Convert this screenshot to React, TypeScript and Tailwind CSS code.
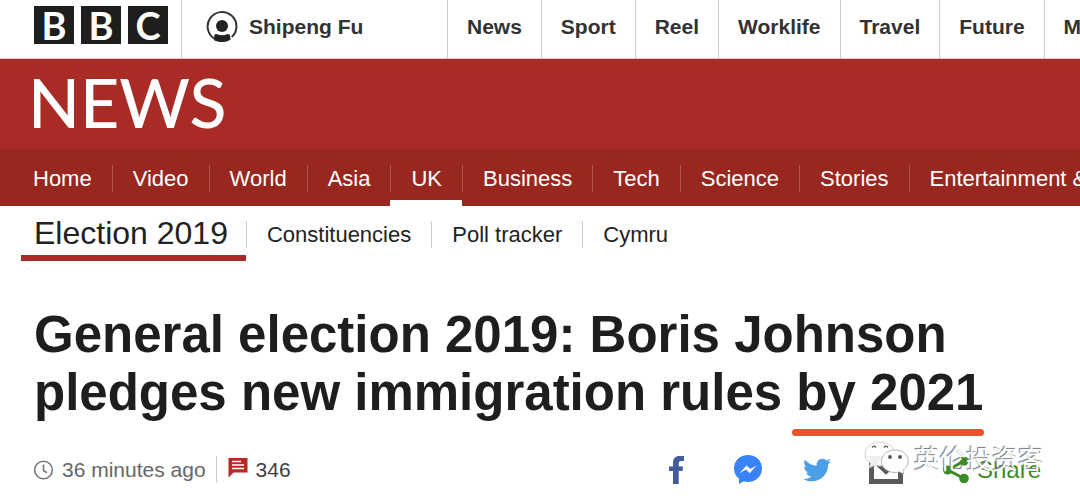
import React from 'react';
import { FaTwitter } from 'react-icons/fa';

const siteLinks = ['News', 'Sport', 'Reel', 'Worklife', 'Travel', 'Future', 'More'];

const newsLinks = [
    'Home',
    'Video',
    'World',
    'Asia',
    'UK',
    'Business',
    'Tech',
    'Science',
    'Stories',
    'Entertainment & Arts',
];

const electionLinks = ['Constituencies', 'Poll tracker', 'Cymru'];

function UserIcon() {
    return (
        <svg viewBox="0 0 32 32" className="w-8 h-8" aria-hidden="true">
            <path d="M9 28A14.4 14.4 0 1 1 25.800 26" fill="none" stroke="#323232" strokeWidth="2" />
            <circle cx="16" cy="15" r="6" fill="#222" />
            <path d="M10.5 23q5.500 2.500 11 0c1.700 0 2.500.8 2.700 2.200l.3 3.300c-5 3.200-11 3.400-16.500.8l.2-4c.2-1.500.8-2.300 2.300-2.300z" fill="#222" />
        </svg>
    );
}

function ClockIcon() {
    return (
        <svg viewBox="0 0 20 20" className="w-5 h-5" fill="none" stroke="#777" strokeWidth="1.6" aria-hidden="true">
            <circle cx="9.5" cy="10" r="8.8" />
            <path d="M9.5 4.500v6l3.500 2.200" />
        </svg>
    );
}

function CommentIcon() {
    return (
        <svg viewBox="0 0 20 24" className="w-5 h-6" aria-hidden="true">
            <path d="M.5 0h19v14.500H5.500L.5 19.500z" fill="#bb2a22" />
            <path d="M4 3.500h9M4 7h12M4 10.500h12" stroke="#fff" strokeWidth="1.3" />
        </svg>
    );
}

function FacebookIcon() {
    return (
        <svg viewBox="0 0 15 28" className="w-[15px] h-7" aria-hidden="true">
            <path d="M4 28V15H0v-4.500h4V7c0-4.500 2.500-7 6.500-7H15v5h-2.500c-2 0-2.800.8-2.800 2.500v3H14L13.500 15H9.700v13z" fill="#445c9b" />
        </svg>
    );
}

function MessengerIcon() {
    return (
        <svg viewBox="0 0 28 29" className="w-7 h-[29px]" aria-hidden="true">
            <path d="M14 0C6 0 0 5.800 0 13.400c0 4.200 1.900 7.800 5 10.200V29l4.700-2.700c1.400.4 2.800.6 4.300.6 8 0 14-5.900 14-13.500S22 0 14 0z" fill="#3a82f7" />
            <path d="M5.500 18.200l7-7.700 3.800 3.500 6.200-3.500-6.800 7.700-3.500-3.600z" fill="#fff" />
        </svg>
    );
}

function MailIcon() {
    return (
        <svg viewBox="0 0 34 28" className="w-[34px] h-7" aria-hidden="true">
            <path d="M0 0h34v28H0z" fill="#5a5a5a" />
            <path d="M5 5h24v18H5z" fill="#fff" />
            <path d="M4 4l13 12L30 4" fill="none" stroke="#5a5a5a" strokeWidth="4" />
        </svg>
    );
}

function ShareIcon() {
    return (
        <svg viewBox="0 0 26 28" className="w-[26px] h-7" fill="#3c8b26" aria-hidden="true">
            <path d="M21 5L5 14l16 8.500" fill="none" stroke="#3c8b26" strokeWidth="3" />
            <circle cx="21" cy="5" r="4.6" />
            <circle cx="4.6" cy="14" r="4.6" />
            <circle cx="21" cy="22.5" r="4.8" />
        </svg>
    );
}

function WeChatIcon() {
    return (
        <svg viewBox="0 0 46 34" className="w-[46px] h-[34px]" aria-hidden="true">
            <path d="M15.500 1C7 1 1 6.500 1 13c0 4 2.200 7.200 5.500 9.400L5 27l5.500-2.700c1.800.5 3.300.7 5 .7C24 25 31 20 31 13S24 1 15.500 1z" fill="#fff" fillOpacity=".9" stroke="#c5c5c5" strokeWidth=".8" />
            <path d="M8 6.500q2-2.500 4 0M20 6.500q2-2.500 4 0" fill="none" stroke="#666" strokeWidth="1.3" />
            <path d="M31 9c-7.500 0-13.500 5-13.500 11.300S23.500 31.500 31 31.500c1.600 0 3-.2 4.500-.7l4.500 2.400-1.200-4c3.400-2.200 5.400-5.200 5.400-8.900C44.200 14 38.500 9 31 9z" fill="#fff" stroke="#a5a5a5" strokeWidth=".8" />
            <circle cx="26" cy="16" r="1.9" fill="#555" />
            <circle cx="36" cy="16" r="1.9" fill="#555" />
        </svg>
    );
}

export default function App() {
    return (
        <div className="min-h-screen overflow-hidden bg-white text-[#222] font-['Liberation_Sans',Arial,sans-serif]">
            {/* Site bar */}
            <header className="flex h-[59px] border-b border-[#e0c4c2]">
                <a href="#" aria-label="BBC" className="flex shrink-0 gap-[7px] pl-[34px] pt-[6px] pr-[13px]">
                    {['B', 'B', 'C'].map((letter, index) => (
                        <span
                            key={index}
                            className="flex h-[38px] w-10 items-center justify-center bg-[#1e1e1c] text-[38px] leading-[38px] font-bold text-white font-[Lato,sans-serif]"
                        >
                            {letter}
                        </span>
                    ))}
                </a>
                <a
                    href="#"
                    className="flex w-[266px] shrink-0 items-center gap-[11px] border-l border-[#ccc] pb-[5px] pl-6 text-[21px] font-bold text-[#323232]"
                >
                    <UserIcon />
                    Shipeng Fu
                </a>
                <nav className="flex">
                    {siteLinks.map((link) => (
                        <a
                            key={link}
                            href="#"
                            className="flex items-center border-l border-[#ccc] px-[19px] pb-[5px] text-[21px] font-bold text-[#323232]"
                        >
                            {link}
                        </a>
                    ))}
                </nav>
            </header>

            {/* Brand */}
            <div className="flex h-[90px] items-start bg-[#a92b26] px-7">
                <a href="#" className="text-[68px] leading-[86px] font-medium text-white font-[Lato,sans-serif]">
                    NEWS
                </a>
            </div>

            {/* Section navigation */}
            <nav className="flex h-[57px] bg-[#982720] pl-3 text-[22px] text-white">
                {newsLinks.map((link, index) => (
                    <a
                        key={link}
                        href="#"
                        className={`flex shrink-0 items-center border-b-[6px] pt-[8px] ${
                            link === 'UK' ? 'border-white' : 'border-transparent'
                        }`}
                    >
                        <span className={`border-l px-5 leading-[27px] ${index > 0 ? 'border-[#b5524d]' : 'border-transparent'}`}>
                            {link}
                        </span>
                    </a>
                ))}
            </nav>

            <nav className="flex h-[55px] pl-[21px] text-[22px]">
                <a href="#" className="border-b-[6px] border-[#a92b26] pl-[13px] pr-[18px] text-[32px] leading-[50px] pt-[2px]">
                    Election 2019
                </a>
                <div className="flex items-center pt-px">
                    {electionLinks.map((link) => (
                        <a key={link} href="#" className="border-l border-[#ccc] px-5 leading-[27px]">
                            {link}
                        </a>
                    ))}
                </div>
            </nav>

            {/* Story */}
            <main className="px-[34px] pt-[45px]">
                <h1 className="text-[51px] leading-[58px] font-bold text-[#1e1e1e]">
                    General election 2019: Boris Johnson
                    <br />
                    pledges new immigration rules{' '}
                    <span className="relative inline-block">
                        by 2021
                        <span className="absolute -left-1 right-0 -bottom-[14px] h-[7px] rounded-full bg-[#e9522d]" />
                    </span>
                </h1>

                <div className="mt-8 flex items-center justify-between pr-[5px] text-[21px]">
                    <div className="flex items-center text-[#666]">
                        <ClockIcon />
                        <span className="pl-2 pr-[10px]">36 minutes ago</span>
                        <a href="#" className="flex items-center gap-2 border-l border-[#ccc] pl-[11px] leading-[27px] text-[#404040]">
                            <CommentIcon />
                            346
                        </a>
                    </div>

                    <div className="relative flex items-center">
                        <button type="button" aria-label="Share on Facebook" className="mr-[50px]">
                            <FacebookIcon />
                        </button>
                        <button type="button" aria-label="Share on Messenger" className="mr-[41px]">
                            <MessengerIcon />
                        </button>
                        <button type="button" aria-label="Share on Twitter" className="mr-[38px]">
                            <FaTwitter className="h-7 w-7 text-[#4b9fe8]" />
                        </button>
                        <button type="button" aria-label="Share by email" className="mr-[40px]">
                            <MailIcon />
                        </button>
                        <button type="button" className="flex items-center gap-2 text-[24px] leading-7 text-[#3c8b26]">
                            <ShareIcon />
                            Share
                        </button>

                        {/* Watermark */}
                        <div className="pointer-events-none absolute -right-[3px] -top-[14px] flex items-center gap-1">
                            <WeChatIcon />
                            <span className="text-[26px] leading-[34px] whitespace-nowrap text-white [text-shadow:-1px_-1px_1px_#777] font-['Noto_Sans_CJK_SC',sans-serif]">
                                英伦投资客
                            </span>
                        </div>
                    </div>
                </div>
            </main>
        </div>
    );
}
